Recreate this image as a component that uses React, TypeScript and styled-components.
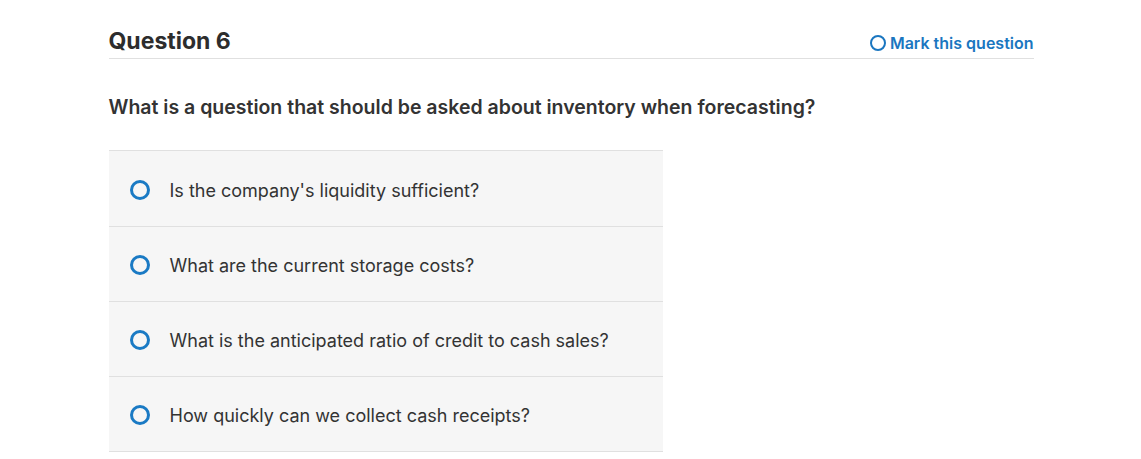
import React from "react";
import styled, { createGlobalStyle } from "styled-components";

const Global = createGlobalStyle`
  html, body { margin: 0; padding: 0; background: #fff; }
  body { font-family: Inter, "Open Sans", sans-serif; color: #333; }
`;

const Page = styled.div`
  width: 925px;
  margin: 0 auto;
  padding-top: 27px;
  padding-left: 1px;
`;

const Header = styled.div`
  display: flex;
  align-items: flex-end;
  justify-content: space-between;
  border-bottom: 1px solid #e0e0e0;
  padding-bottom: 3px;
`;

const Title = styled.h2`
  margin: 0;
  font-size: 23px;
  font-weight: 700;
  color: #2d2d2d;
  line-height: 28px;
`;

const MarkButton = styled.button`
  display: flex;
  align-items: center;
  gap: 4px;
  background: none;
  border: none;
  padding: 0;
  margin-bottom: 2px;
  font-family: inherit;
  font-size: 16px;
  font-weight: 600;
  color: #1a76c0;
  cursor: pointer;
`;

const MarkCircle = styled.span`
  width: 12px;
  height: 12px;
  border: 2px solid #1a76c0;
  border-radius: 50%;
`;

const Prompt = styled.p`
  margin: 36px 0 31px;
  font-size: 19.5px;
  font-weight: 600;
  color: #333;
  line-height: 24px;
`;

const Options = styled.div`
  width: 554px;
  display: flex;
  flex-direction: column;
`;

const Option = styled.label`
  display: flex;
  align-items: center;
  box-sizing: border-box;
  height: 75px;
  padding: 2px 0 0 21px;
  gap: 20px;
  background: #f6f6f6;
  border-top: 1px solid #e0e0e0;
  font-size: 18px;
  color: #333;
  cursor: pointer;
  &:first-child { height: 76px; padding-top: 3px; }
  &:last-child { border-bottom: 1px solid #e0e0e0; height: 76px; }
`;

const Radio = styled.span`
  width: 14px;
  height: 14px;
  border: 3px solid #1a7ac4;
  border-radius: 50%;
  flex: none;
`;

const options = [
  "Is the company's liquidity sufficient?",
  "What are the current storage costs?",
  "What is the anticipated ratio of credit to cash sales?",
  "How quickly can we collect cash receipts?",
];

export default function App() {
  return (
    <>
      <Global />
      <Page>
        <Header>
          <Title>Question 6</Title>
          <MarkButton>
            <MarkCircle />
            Mark this question
          </MarkButton>
        </Header>
        <Prompt>What is a question that should be asked about inventory when forecasting?</Prompt>
        <Options>
          {options.map((o) => (
            <Option key={o}>
              <Radio />
              {o}
            </Option>
          ))}
        </Options>
      </Page>
    </>
  );
}
